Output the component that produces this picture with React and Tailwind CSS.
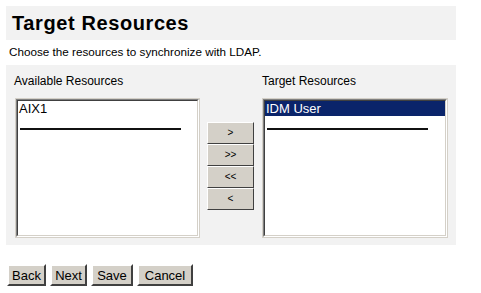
import React from 'react';

const font = { fontFamily: '"Liberation Sans", Arial, sans-serif' };

const MoveButton = ({ label }) => (
  <button className="block w-[47px] h-[22px] bg-[#d4d0c8] border border-t-white border-l-white border-b-[#404040] border-r-[#404040] text-[10px] text-black leading-none">
    {label}
  </button>
);

const ListBox = ({ items, selected }) => (
  <div className="border border-[#d4d0c8] h-[140px]">
    <div className="border border-t-[#808080] border-l-[#808080] border-b-white border-r-white h-full">
      <div className="border border-t-[#404040] border-l-[#404040] border-b-[#d4d0c8] border-r-[#d4d0c8] bg-white h-full">
        {items.map((item) => (
          <div
            key={item}
            className={
              'text-[13px] leading-[15px] px-[1px] ' +
              (item === selected ? 'bg-[#0a246a] text-white' : 'text-black')
            }
          >
            {item}
          </div>
        ))}
        <div className="h-[12px]"></div>
        <div className="ml-[2px] w-[161px] h-[2px] bg-[#111]"></div>
      </div>
    </div>
  </div>
);

const FormButton = ({ label, width }) => (
  <button
    className={
      'h-[22px] bg-[#d4d0c8] border-2 border-t-white border-l-white border-b-[#404040] border-r-[#404040] text-[13px] text-black leading-none ' +
      width
    }
  >
    {label}
  </button>
);

const App = () => {
  return (
    <div className="w-[481px] h-[293px] bg-white p-[6px]" style={font}>
      {/* Header */}
      <div className="w-[450px] h-[34px] bg-[#f2f2f2] flex items-center pl-[6px]">
        <h1 className="text-[20px] font-bold text-black leading-none tracking-[0.6px]">Target Resources</h1>
      </div>

      <p className="text-[11.7px] text-black leading-[14px] mt-[5px] ml-[3px]">
        Choose the resources to synchronize with LDAP.
      </p>

      {/* Resource picker */}
      <div className="w-[450px] bg-[#f2f2f2] mt-[6px] pl-[9px] pt-[9px] pb-[7px]">
        <div className="grid grid-cols-[185px_62px_186px]">
          <div className="text-[12px] leading-[14px] text-black ml-[-1px]">Available Resources</div>
          <div></div>
          <div className="text-[12px] leading-[14px] text-black">Target Resources</div>

          <div className="mt-[10px]">
            <ListBox items={['AIX1']} />
          </div>
          <div className="mt-[10px] flex flex-col justify-center ml-[7px] pb-[4px]">
            <MoveButton label=">" />
            <MoveButton label=">>" />
            <MoveButton label="<<" />
            <MoveButton label="<" />
          </div>
          <div className="mt-[10px]">
            <ListBox items={['IDM User']} selected="IDM User" />
          </div>
        </div>
      </div>

      {/* Actions */}
      <div className="flex gap-[4px] mt-[19px] ml-[1px]">
        <FormButton label="Back" width="w-[39px]" />
        <FormButton label="Next" width="w-[37px]" />
        <FormButton label="Save" width="w-[42px]" />
        <FormButton label="Cancel" width="w-[56px]" />
      </div>
    </div>
  );
};

export default App;
